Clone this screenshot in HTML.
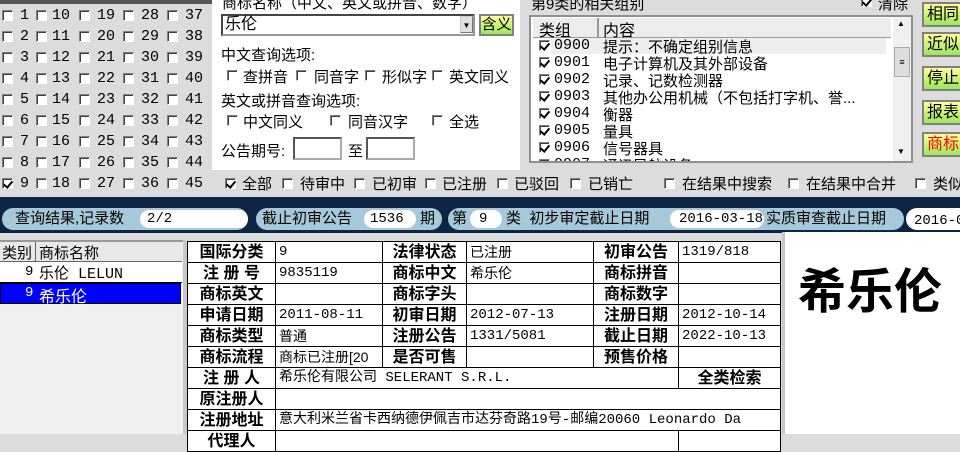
<!DOCTYPE html>
<html><head><meta charset="utf-8"><style>
*{margin:0;padding:0;box-sizing:border-box}
body{width:960px;height:434px;overflow:hidden;position:relative;background:#dcdcdc;font-family:"Liberation Sans","WenQuanYi Zen Hei","Noto Sans CJK SC",sans-serif;font-size:14px;color:#000}
.a{position:absolute;white-space:nowrap}
.cb{position:absolute;width:11px;height:11px;border:1px solid #808080;border-right-color:#fff;border-bottom-color:#fff;background:#fff;box-shadow:inset 1px 1px 0 #404040}
.ck::after{content:"";position:absolute;left:2px;top:0px;width:4px;height:7px;border-right:2px solid #000;border-bottom:2px solid #000;transform:rotate(40deg)}
.m{font-family:"Liberation Mono","WenQuanYi Zen Hei",monospace}
.btn{position:absolute;left:922px;width:40px;height:25px;border:2px solid #808080;background:linear-gradient(#ffff9a,#9ce65a);font-size:16px;padding-left:3px;line-height:21px;overflow:hidden}
.pill{position:absolute;top:208px;height:22px;border-radius:11px;background:#a7c8d8;line-height:22px;font-size:15px}
.pv{position:absolute;top:2px;height:18px;border-radius:9px;background:#fff;line-height:18px;font-size:14px}
table{border-collapse:collapse;position:absolute;left:187px;top:241px;background:#fff}
td{border:1px solid #000;height:21px;font-size:14px;padding:0 3px;white-space:nowrap;overflow:hidden;line-height:19px}
td.l{font-weight:bold;font-size:16px;text-align:center}
</style></head><body>
<div class="a" style="left:0;top:0;width:212px;height:4px;background:#555"></div>
<div class="a" style="left:212px;top:0;width:308px;height:170px;background:#fff"></div>
<div id="grid"></div>
<script>
var xs=[[2,20],[36,52],[79,97],[123,141],[167,185]],h='';
for(var c=0;c<5;c++)for(var r=0;r<9;r++){var n=c*9+r+1,y=10+r*21;
h+='<div class="cb'+(n==9?' ck':'')+'" style="left:'+xs[c][0]+'px;top:'+y+'px"></div><div class="a m" style="left:'+xs[c][1]+'px;top:'+(y-3)+'px;font-size:15px">'+n+'</div>';}
document.getElementById('grid').innerHTML=h;
</script>
<div class="a" style="left:222px;top:-8px;font-size:15px">商标名称（中文、英文或拼音、数字）</div>
<div class="a" style="left:221px;top:14px;width:254px;height:22px;border:2px inset #999;background:#fff;font-size:16px;line-height:18px;padding-left:2px">乐伦</div>
<div class="a" style="left:460px;top:16px;width:13px;height:17px;background:#e0e0e0;border:1px outset #ccc;font-size:8px;text-align:center;line-height:17px">▼</div>
<div class="a" style="left:479px;top:14px;width:35px;height:22px;border:2px solid #808080;background:linear-gradient(#ffff9a,#9ce65a);font-size:15px;text-align:center;line-height:18px">含义</div>
<div class="a" style="left:221px;top:44px;font-size:15px">中文查询选项:</div>
<div class="cb" style="left:227px;top:70px"></div><div class="a" style="left:243px;top:66px;font-size:15px">查拼音</div>
<div class="cb" style="left:296px;top:70px"></div><div class="a" style="left:314px;top:66px;font-size:15px">同音字</div>
<div class="cb" style="left:365px;top:70px"></div><div class="a" style="left:382px;top:66px;font-size:15px">形似字</div>
<div class="cb" style="left:432px;top:70px"></div><div class="a" style="left:449px;top:66px;font-size:15px">英文同义</div>
<div class="a" style="left:221px;top:90px;font-size:15px">英文或拼音查询选项:</div>
<div class="cb" style="left:227px;top:115px"></div><div class="a" style="left:243px;top:111px;font-size:15px">中文同义</div>
<div class="cb" style="left:330px;top:115px"></div><div class="a" style="left:348px;top:111px;font-size:15px">同音汉字</div>
<div class="cb" style="left:432px;top:115px"></div><div class="a" style="left:449px;top:111px;font-size:15px">全选</div>
<div class="a" style="left:221px;top:140px;font-size:15px">公告期号:</div>
<div class="a" style="left:293px;top:137px;width:49px;height:23px;border:2px inset #aaa;background:#fff"></div>
<div class="a" style="left:348px;top:140px;font-size:15px">至</div>
<div class="a" style="left:366px;top:137px;width:49px;height:23px;border:2px inset #aaa;background:#fff"></div>
<!-- right list -->
<div class="a" style="left:531px;top:-7px;font-size:15px">第9类的相关组别</div>
<div class="cb ck" style="left:861px;top:-4px"></div><div class="a" style="left:878px;top:-7px;font-size:15px">清除</div>
<div class="a" style="left:529px;top:15px;width:384px;height:148px;border:2px solid #909090;background:#fff;overflow:hidden">
<div class="a" style="left:2px;top:1px;width:358px;height:20px;background:#ececec;border-bottom:1px solid #999"></div>
<div class="a" style="left:66px;top:1px;width:2px;height:20px;background:#999"></div>
<div class="a" style="left:8px;top:0px;font-size:16px">类组</div><div class="a" style="left:72px;top:0px;font-size:16px">内容</div>
<div class="a" style="left:20px;top:21px;width:335px;height:16px;background:#eee"></div>
<div id="lst"></div>
<div class="a" style="left:362px;top:0;width:18px;height:144px;background:#f0f0f0"></div>
<div class="a" style="left:363px;top:30px;width:16px;height:30px;background:#ddd;border:1px solid #aaa;font-size:9px;text-align:center;line-height:28px">≡</div>
<div class="a" style="left:366px;top:2px;font-size:8px">▲</div><div class="a" style="left:366px;top:130px;font-size:8px">▼</div>
</div>
<script>
var it=[['0900','提示：不确定组别信息'],['0901','电子计算机及其外部设备'],['0902','记录、记数检测器'],['0903','其他办公用机械（不包括打字机、誉...'],['0904','衡器'],['0905','量具'],['0906','信号器具'],['0907','通讯导航设备']],s='';
for(var i=0;i<8;i++){var y=21+i*17;s+='<div class="cb ck" style="left:8px;top:'+(y+2)+'px"></div><div class="a m" style="left:23px;top:'+(y-1)+'px;font-size:15px">'+it[i][0]+'</div><div class="a" style="left:72px;top:'+(y-2)+'px;font-size:15px">'+it[i][1]+'</div>';}
document.getElementById('lst').innerHTML=s;
</script>
<div class="btn" style="top:2px">相同</div>
<div class="btn" style="top:32px">近似</div>
<div class="btn" style="top:66px">停止</div>
<div class="btn" style="top:100px">报表</div>
<div class="btn" style="top:132px;color:#f00">商标</div>
<!-- status row -->
<div class="cb ck" style="left:225px;top:178px"></div><div class="a" style="left:242px;top:173px;font-size:15px">全部</div>
<div class="cb" style="left:282px;top:178px"></div><div class="a" style="left:300px;top:173px;font-size:15px">待审中</div>
<div class="cb" style="left:354px;top:178px"></div><div class="a" style="left:372px;top:173px;font-size:15px">已初审</div>
<div class="cb" style="left:425px;top:178px"></div><div class="a" style="left:442px;top:173px;font-size:15px">已注册</div>
<div class="cb" style="left:497px;top:178px"></div><div class="a" style="left:514px;top:173px;font-size:15px">已驳回</div>
<div class="cb" style="left:570px;top:178px"></div><div class="a" style="left:588px;top:173px;font-size:15px">已销亡</div>
<div class="cb" style="left:664px;top:178px"></div><div class="a" style="left:682px;top:173px;font-size:15px">在结果中搜索</div>
<div class="cb" style="left:788px;top:178px"></div><div class="a" style="left:806px;top:173px;font-size:15px">在结果中合并</div>
<div class="cb" style="left:915px;top:178px"></div><div class="a" style="left:933px;top:173px;font-size:15px">类似</div>
<!-- dark band -->
<div class="a" style="left:0;top:197px;width:960px;height:36px;background:#0d2444"></div>
<div class="pill" style="left:2px;width:246px"><span class="a" style="left:13px">查询结果,记录数</span><div class="pv m" style="left:138px;width:108px;padding-left:7px">2/2</div></div>
<div class="pill" style="left:256px;width:186px"><span class="a" style="left:6px">截止初审公告</span><div class="pv m" style="left:108px;width:52px;padding-left:6px">1536</div><span class="a" style="left:164px">期</span></div>
<div class="pill" style="left:448px;width:456px"><span class="a" style="left:4px">第</span><div class="pv m" style="left:22px;width:32px;padding-left:9px">9</div><span class="a" style="left:58px">类 &nbsp;初步审定截止日期</span><div class="pv m" style="left:222px;width:94px;padding-left:9px">2016-03-18</div><span class="a" style="left:318px">实质审查截止日期</span></div>
<div class="pill" style="left:906px;width:70px;background:#fff;padding-left:8px;font-size:14px"><span class="m">2016-0</span></div>
<!-- left list -->
<div class="a" style="left:0;top:240px;width:183px;height:194px;background:#f0f0f0;border-top:2px solid #999"></div>
<div class="a" style="left:0;top:242px;width:182px;height:20px;background:#e8e8e8;border-bottom:1px solid #666"></div>
<div class="a" style="left:35px;top:242px;width:1px;height:62px;background:#666"></div>
<div class="a" style="left:2px;top:242px;font-size:15px">类别</div><div class="a" style="left:39px;top:242px;font-size:15px">商标名称</div>
<div class="a" style="left:0;top:262px;width:182px;height:21px;background:#fff;border-bottom:1px solid #000"></div>
<div class="a m" style="left:25px;top:264px">9</div><div class="a m" style="left:39px;top:262px;font-size:15px">乐伦 LELUN</div>
<div class="a" style="left:0;top:283px;width:181px;height:21px;background:#0000ff;border:1px solid #000"></div>
<div class="a m" style="left:25px;top:285px;color:#fff">9</div><div class="a" style="left:39px;top:283px;font-size:16px;color:#fff">希乐伦</div>
<div class="a" style="left:183px;top:240px;width:4px;height:194px;background:#c8c8c8"></div>
<!-- table -->
<table>
<col style="width:88px"><col style="width:107px"><col style="width:84px"><col style="width:127px"><col style="width:85px"><col style="width:102px">
<tr><td class="l">国际分类</td><td class="m">9</td><td class="l">法律状态</td><td>已注册</td><td class="l">初审公告</td><td class="m">1319/818</td></tr>
<tr><td class="l">注 册 号</td><td class="m">9835119</td><td class="l">商标中文</td><td>希乐伦</td><td class="l">商标拼音</td><td></td></tr>
<tr><td class="l">商标英文</td><td></td><td class="l">商标字头</td><td></td><td class="l">商标数字</td><td></td></tr>
<tr><td class="l">申请日期</td><td class="m">2011-08-11</td><td class="l">初审日期</td><td class="m">2012-07-13</td><td class="l">注册日期</td><td class="m">2012-10-14</td></tr>
<tr><td class="l">商标类型</td><td>普通</td><td class="l">注册公告</td><td class="m">1331/5081</td><td class="l">截止日期</td><td class="m">2022-10-13</td></tr>
<tr><td class="l">商标流程</td><td style="max-width:107px">商标已注册[20</td><td class="l">是否可售</td><td></td><td class="l">预售价格</td><td></td></tr>
<tr><td class="l">注 册 人</td><td colspan="4" class="m">希乐伦有限公司 SELERANT S.R.L.</td><td class="l">全类检索</td></tr>
<tr><td class="l">原注册人</td><td colspan="5"></td></tr>
<tr><td class="l">注册地址</td><td colspan="5" class="m">意大利米兰省卡西纳德伊佩吉市达芬奇路19号-邮编20060 Leonardo Da</td></tr>
<tr><td class="l">代理人</td><td colspan="4"></td><td></td></tr>
</table>
<div class="a" style="left:782px;top:232px;width:3px;height:202px;background:#c8c8c8"></div>
<div class="a" style="left:785px;top:232px;width:175px;height:202px;background:#fff"></div>
<div class="a" style="left:798px;top:252px;font-size:48px;font-family:'WenQuanYi Zen Hei','Noto Sans CJK SC',sans-serif;font-weight:bold">希乐伦</div>
</body></html>
